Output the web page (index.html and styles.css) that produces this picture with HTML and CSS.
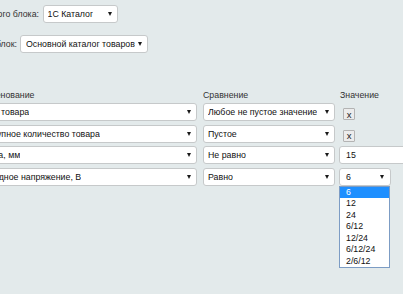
FILE: index.html
```html
<!DOCTYPE html>
<html lang="ru">
<head>
<meta charset="utf-8">
<title>Условия</title>
<link rel="stylesheet" href="styles.css">
</head>
<body>
<div class="page">
  <div class="line line-type">
    <span class="label">Тип информационного блока:</span>
    <div class="select sel-type"><span class="val">1С Каталог</span><i class="arrow"></i></div>
  </div>
  <div class="line line-block">
    <span class="label">Информационный блок:</span>
    <div class="select sel-block"><span class="val">Основной каталог товаров</span><i class="arrow"></i></div>
  </div>

  <div class="cond">
    <div class="head head-name">Наименование</div>
    <div class="head">Сравнение</div>
    <div class="head head-val">Значение</div>

    <div class="select sel-prop"><span class="val">Цена товара</span><i class="arrow"></i></div>
    <div class="select sel-cmp"><span class="val">Любое не пустое значение</span><i class="arrow"></i></div>
    <div class="cell"><button class="xbtn">x</button></div>

    <div class="select sel-prop"><span class="val">Доступное количество товара</span><i class="arrow"></i></div>
    <div class="select sel-cmp"><span class="val">Пустое</span><i class="arrow"></i></div>
    <div class="cell"><button class="xbtn">x</button></div>

    <div class="select sel-prop"><span class="val">Длина, мм</span><i class="arrow"></i></div>
    <div class="select sel-cmp"><span class="val">Не равно</span><i class="arrow"></i></div>
    <div class="cell"><div class="input">15</div></div>

    <div class="select sel-prop"><span class="val">Выходное напряжение, В</span><i class="arrow"></i></div>
    <div class="select sel-cmp"><span class="val">Равно</span><i class="arrow"></i></div>
    <div class="cell">
      <div class="select sel-val"><span class="val">6</span><i class="arrow"></i>
        <ul class="list">
          <li class="item selected">6</li>
          <li class="item">12</li>
          <li class="item">24</li>
          <li class="item">6/12</li>
          <li class="item">12/24</li>
          <li class="item">6/12/24</li>
          <li class="item">2/6/12</li>
        </ul>
      </div>
    </div>
  </div>
</div>
</body>
</html>
```

FILE: styles.css
```css
html, body {
  margin: 0;
  padding: 0;
}
body {
  background: #e3eaeb;
  font-family: "Liberation Sans", Arial, sans-serif;
  font-size: 8.8px;
  color: #333;
  overflow: hidden;
  width: 403px;
  height: 294px;
}
.page {
  padding-top: 5px;
}
.line {
  display: flex;
  align-items: center;
  height: 18px;
}
.label {
  flex: none;
  width: 160px;
  text-align: right;
  white-space: nowrap;
}
.line-type .label {
  margin-left: -121px;
}
.line-type .select {
  margin-left: 3.5px;
  width: 75px;
}
.line-block {
  margin-top: 12px;
}
.line-block .label {
  margin-left: -143px;
}
.line-block .select {
  margin-left: 3px;
  width: 128px;
  padding-left: 5px;
}
.select {
  position: relative;
  display: flex;
  align-items: center;
  justify-content: space-between;
  box-sizing: border-box;
  height: 18px;
  border: 1px solid #c6c9ca;
  border-radius: 3px;
  background: #fff;
  padding: 0 5px 0 4px;
  color: #111;
  white-space: nowrap;
}
.val {
  overflow: hidden;
}
.arrow {
  flex: none;
  width: 0;
  height: 0;
  border-left: 2.5px solid transparent;
  border-right: 2.5px solid transparent;
  border-top: 4px solid #1a1a1a;
  margin-left: 3px;
}
.cond {
  display: grid;
  grid-template-columns: 230.5px 136px 100px;
  grid-auto-rows: 18px;
  grid-template-rows: 10px;
  row-gap: 3.5px;
  margin-left: -27.5px;
  margin-top: 36.5px;
}
.head {
  line-height: 10px;
  white-space: nowrap;
}
.head-name {
  margin-left: 1px;
}
.head-val {
  margin-left: 1px;
}
.sel-prop {
  width: 224.5px;
}
.sel-cmp {
  width: 132px;
}
.cell {
  position: relative;
}
.xbtn {
  display: block;
  box-sizing: border-box;
  width: 12px;
  height: 12px;
  margin: 5px 0 0 4px;
  padding: 0;
  border: 1px solid #b3b3b3;
  border-radius: 1px;
  background: #ececec;
  font-family: "Liberation Sans", Arial, sans-serif;
  font-size: 9.5px;
  line-height: 9px;
  color: #222;
  text-align: center;
}
.input {
  box-sizing: border-box;
  height: 18px;
  width: 90px;
  border: 1px solid #c6c9ca;
  border-radius: 3px 0 0 3px;
  background: #fff;
  padding-left: 6px;
  line-height: 16px;
  color: #111;
}
.sel-val {
  width: 52px;
  padding-left: 6px;
  padding-right: 6px;
}
.list {
  position: absolute;
  left: -1px;
  top: 17px;
  width: 51px;
  box-sizing: border-box;
  margin: 0;
  padding: 0;
  list-style: none;
  border: 1px solid #7c9cc4;
  background: #fff;
}
.item {
  height: 11.5px;
  line-height: 11.5px;
  padding-left: 6px;
  color: #111;
}
.item.selected {
  background: #1e8fff;
  color: #fff;
}
```
